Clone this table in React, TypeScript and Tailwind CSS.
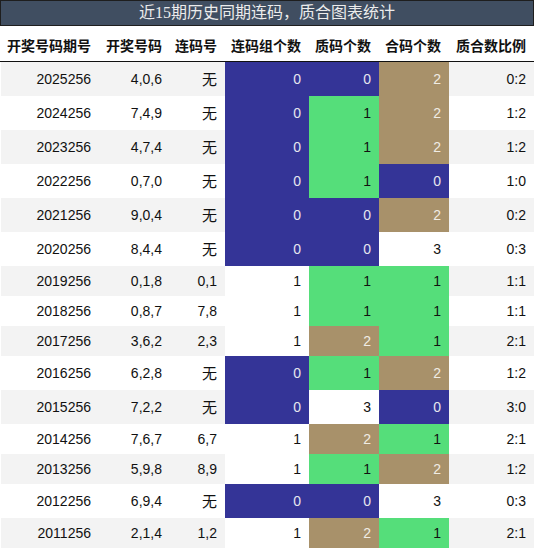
import React from "react";

type Row = [string, string, string, number, number, number, string];

const rows: Row[] = [
  ["2025256", "4,0,6", "无", 0, 0, 2, "0:2"],
  ["2024256", "7,4,9", "无", 0, 1, 2, "1:2"],
  ["2023256", "4,7,4", "无", 0, 1, 2, "1:2"],
  ["2022256", "0,7,0", "无", 0, 1, 0, "1:0"],
  ["2021256", "9,0,4", "无", 0, 0, 2, "0:2"],
  ["2020256", "8,4,4", "无", 0, 0, 3, "0:3"],
  ["2019256", "0,1,8", "0,1", 1, 1, 1, "1:1"],
  ["2018256", "0,8,7", "7,8", 1, 1, 1, "1:1"],
  ["2017256", "3,6,2", "2,3", 1, 2, 1, "2:1"],
  ["2016256", "6,2,8", "无", 0, 1, 2, "1:2"],
  ["2015256", "7,2,2", "无", 0, 3, 0, "3:0"],
  ["2014256", "7,6,7", "6,7", 1, 2, 1, "2:1"],
  ["2013256", "5,9,8", "8,9", 1, 1, 2, "1:2"],
  ["2012256", "6,9,4", "无", 0, 0, 3, "0:3"],
  ["2011256", "2,1,4", "1,2", 1, 2, 1, "2:1"],
];

const GRID = "grid grid-cols-[99px_71px_55px_84px_70px_70px_85px]";

function countCls(n: number) {
  if (n === 0) return "bg-[#343497] text-[#e6e6ee]";
  if (n === 1) return "bg-[#55de7a] text-[#111111]";
  if (n === 2) return "bg-[#a8916a] text-[#f0ece4]";
  return "bg-white text-[#111111]";
}

function groupCls(n: number) {
  if (n === 0) return "bg-[#343497] text-[#e6e6ee]";
  return "bg-white text-[#111111]";
}

export default function App() {
  return (
    <div
      className="w-[534px] h-[549px] bg-white overflow-hidden"
      style={{}}
    >
      <div className="h-[26px] bg-[#404e61] border border-[#1e1e1e] flex items-center justify-center text-[16px] text-[#ececec] font-['Liberation_Serif','Noto_Sans_CJK_SC',serif] leading-none">
        近15期历史同期连码，质合图表统计
      </div>
      <div
        className={`${GRID} h-[36px] border-b border-[#111111] bg-white text-[14px] font-bold text-[#111111] font-['Noto_Sans_CJK_SC',sans-serif] leading-none`}
      >
        {["开奖号码期号", "开奖号码", "连码号", "连码组个数", "质码个数", "合码个数", "质合数比例"].map(
          (h) => (
            <div key={h} className="flex items-center justify-end pr-[8px] pt-[3px] whitespace-nowrap">
              {h}
            </div>
          )
        )}
      </div>
      {rows.map((r, i) => {
        const tall = r[2] === "无";
        const stripe = i % 2 === 0 ? "bg-[#f3f3f3]" : "bg-white";
        const h = tall ? "h-[34px]" : "h-[30px]";
        const cell = "flex items-center justify-end pr-[8px] whitespace-nowrap";
        return (
          <div
            key={r[0]}
            className={`${GRID} ${h} text-[14px] text-[#111111] font-['Liberation_Sans','Noto_Sans_CJK_SC',sans-serif] leading-none`}
          >
            <div className={`${cell} ${stripe} border-l border-white`}>{r[0]}</div>
            <div className={`${cell} ${stripe}`}>{r[1]}</div>
            <div className={`${cell} ${stripe} ${tall ? "text-[15px]" : ""}`}>{r[2]}</div>
            <div className={`${cell} ${groupCls(r[3])}`}>{r[3]}</div>
            <div className={`${cell} ${countCls(r[4])}`}>{r[4]}</div>
            <div className={`${cell} ${countCls(r[5])}`}>{r[5]}</div>
            <div className={`${cell} ${stripe}`}>{r[6]}</div>
          </div>
        );
      })}
    </div>
  );
}
